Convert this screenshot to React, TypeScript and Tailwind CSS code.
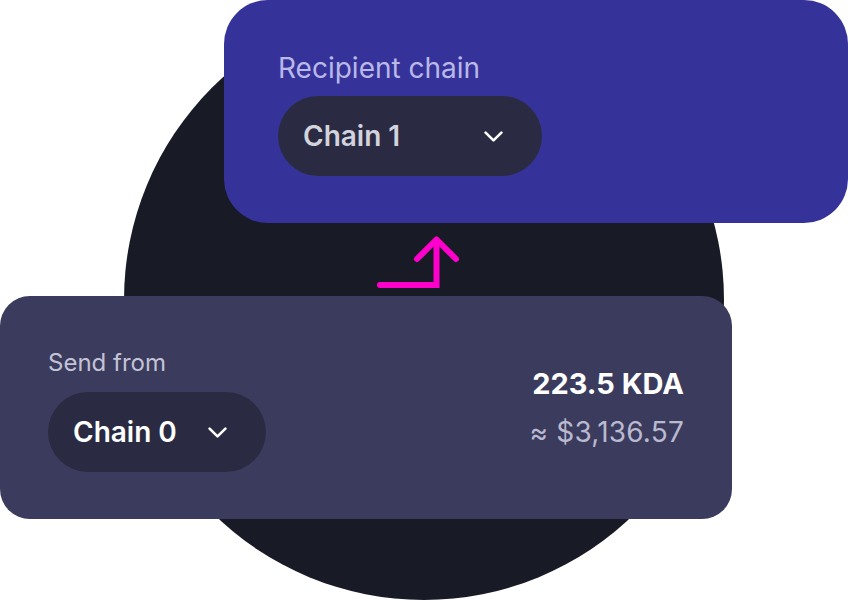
import React from 'react'

function Chevron({ className }: { className?: string }) {
  return (
    <svg width="19" height="11" viewBox="0 0 19 11" fill="none" className={className}>
      <path d="M1.6 1.6 L9.5 9.4 L17.4 1.6" stroke="currentColor" strokeWidth="2.6" strokeLinecap="round" strokeLinejoin="round" />
    </svg>
  )
}

function ChainSelect({ label, width, textClass }: { label: string; width: string; textClass: string }) {
  return (
    <div className={`flex h-20 items-center justify-between rounded-full bg-[#2a2b42] pl-[25px] pr-[39px] ${width}`}>
      <span className={`text-[28px] font-semibold leading-none ${textClass}`}>{label}</span>
      <Chevron className="text-white" />
    </div>
  )
}

export default function App() {
  return (
    <div className="relative h-[600px] w-[848px] overflow-hidden bg-white font-['Inter',sans-serif]">
      {/* backdrop disc */}
      <div className="absolute left-[124px] top-0 h-[600px] w-[600px] rounded-full bg-[#181a26]" />

      {/* recipient card */}
      <div className="absolute left-[224px] top-0 h-[223px] w-[624px] rounded-[44px] bg-[#353399] pl-[54px] pt-[54px]">
        <div className="text-[28px] leading-none text-[#b9b8e8]">Recipient chain</div>
        <div className="mt-[14px]">
          <ChainSelect label="Chain 1" width="w-[264px]" textClass="text-[#d3d3dd]" />
        </div>
      </div>

      {/* transfer arrow */}
      <svg className="absolute left-[370px] top-[230px]" width="95" height="64" viewBox="0 0 95 64" fill="none">
        <path d="M10 55 H66.5 V12" stroke="#ff00cc" strokeWidth="6" strokeLinecap="round" strokeLinejoin="miter" />
        <path d="M47 29 L66.5 9.5 L86 29" stroke="#ff00cc" strokeWidth="6" strokeLinecap="round" strokeLinejoin="round" />
      </svg>

      {/* sender card */}
      <div className="absolute left-0 top-[296px] flex h-[223px] w-[732px] justify-between rounded-[30px] bg-[#3b3b5d] px-12 pt-[55px]">
        <div>
          <div className="text-[24px] leading-none text-[#c3c3d7]">Send from</div>
          <div className="mt-[17px]">
            <ChainSelect label="Chain 0" width="w-[218px] pl-[24px]" textClass="text-white" />
          </div>
        </div>
        <div className="mt-[18px] flex flex-col items-end">
          <div className="text-[29px] font-bold leading-none text-white">223.5 KDA</div>
          <div className="mt-[20px] text-[28px] leading-none tracking-[0.2px] text-[#b9b9cf]">≈ $3,136.57</div>
        </div>
      </div>
    </div>
  )
}
